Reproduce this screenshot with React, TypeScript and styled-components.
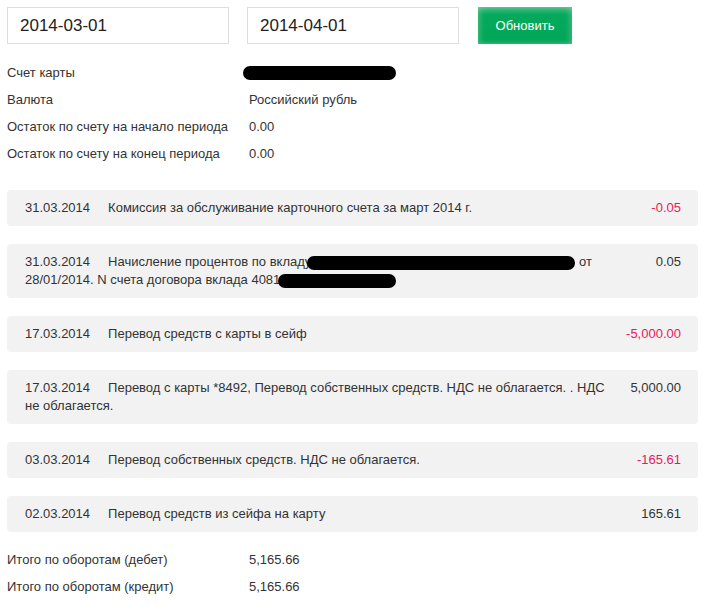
import { createGlobalStyle } from "styled-components";
import styled from "styled-components";

const GlobalStyle = createGlobalStyle`
  body {
    margin: 0;
    background: #fff;
    font-family: "Liberation Sans", Arial, sans-serif;
    color: #333;
  }
`;

const Page = styled.div`
  padding: 7px;
  width: 691px;
  font-size: 13px;
`;

const Filters = styled.div`
  display: flex;
  align-items: center;
  gap: 18px;
`;

const DateInput = styled.input<{ $w: number }>`
  box-sizing: border-box;
  width: ${(p) => p.$w}px;
  height: 37px;
  border: 1px solid #dedede;
  padding: 0 12px;
  font-family: "Liberation Sans", Arial, sans-serif;
  font-size: 17px;
  color: #222;
  outline: none;
`;

const RefreshButton = styled.button`
  width: 94px;
  height: 37px;
  margin-left: 1px;
  border: none;
  background: linear-gradient(#3cbb7c 0, #06a95b 8px, #00a659 100%);
  box-shadow: inset 3px 0 5px rgba(255, 255, 255, 0.18),
    inset -3px 0 5px rgba(255, 255, 255, 0.18);
  color: #fff;
  font-family: "Liberation Sans", Arial, sans-serif;
  font-size: 13px;
  cursor: pointer;
`;

const InfoTable = styled.div<{ $top: number }>`
  display: grid;
  grid-template-columns: 242px auto;
  grid-auto-rows: 27px;
  align-items: center;
  margin-top: ${(p) => p.$top}px;
`;

const Redacted = styled.span<{ $w: number; $shift?: number }>`
  display: inline-block;
  vertical-align: middle;
  width: ${(p) => p.$w}px;
  height: 14px;
  margin-left: ${(p) => p.$shift ?? 0}px;
  background: #000;
  border-radius: 7px;
`;

const List = styled.div`
  display: flex;
  flex-direction: column;
  gap: 18px;
  margin-top: 23px;
`;

const Row = styled.div`
  display: grid;
  grid-template-columns: 1fr 70px;
  padding: 9px 17px 9px 18px;
  background: #f2f2f2;
  border-radius: 4px;
  line-height: 18px;
`;

const Description = styled.div`
  padding-right: 4px;
`;

const DateCell = styled.span`
  margin-right: 18px;
`;

const Amount = styled.div<{ $neg?: boolean }>`
  text-align: right;
  color: ${(p) => (p.$neg ? "#e8195c" : "#333")};
`;

type Tx = { date: string; text: React.ReactNode; amount: string };

const txs: Tx[] = [
  {
    date: "31.03.2014",
    text: "Комиссия за обслуживание карточного счета за март 2014 г.",
    amount: "-0.05",
  },
  {
    date: "31.03.2014",
    text: (
      <>
        Начисление процентов по вкладу
        <Redacted $w={268} $shift={-4} /> от 28/01/2014. N счета договора вклада 4081
        <Redacted $w={118} $shift={-2} />
      </>
    ),
    amount: "0.05",
  },
  {
    date: "17.03.2014",
    text: "Перевод средств с карты в сейф",
    amount: "-5,000.00",
  },
  {
    date: "17.03.2014",
    text: "Перевод с карты *8492, Перевод собственных средств. НДС не облагается. . НДС не облагается.",
    amount: "5,000.00",
  },
  {
    date: "03.03.2014",
    text: "Перевод собственных средств. НДС не облагается.",
    amount: "-165.61",
  },
  {
    date: "02.03.2014",
    text: "Перевод средств из сейфа на карту",
    amount: "165.61",
  },
];

export default function App() {
  return (
    <>
      <GlobalStyle />
      <Page>
        <Filters>
          <DateInput $w={222} defaultValue="2014-03-01" />
          <DateInput $w={212} defaultValue="2014-04-01" />
          <RefreshButton>Обновить</RefreshButton>
        </Filters>

        <InfoTable $top={15}>
          <div>Счет карты</div>
          <div>
            <Redacted $w={153} $shift={-6} />
          </div>
          <div>Валюта</div>
          <div>Российский рубль</div>
          <div>Остаток по счету на начало периода</div>
          <div>0.00</div>
          <div>Остаток по счету на конец периода</div>
          <div>0.00</div>
        </InfoTable>

        <List>
          {txs.map((t, i) => (
            <Row key={i}>
              <Description>
                <DateCell>{t.date}</DateCell>
                {t.text}
              </Description>
              <Amount $neg={t.amount.startsWith("-")}>{t.amount}</Amount>
            </Row>
          ))}
        </List>

        <InfoTable $top={14}>
          <div>Итого по оборотам (дебет)</div>
          <div>5,165.66</div>
          <div>Итого по оборотам (кредит)</div>
          <div>5,165.66</div>
        </InfoTable>
      </Page>
    </>
  );
}
